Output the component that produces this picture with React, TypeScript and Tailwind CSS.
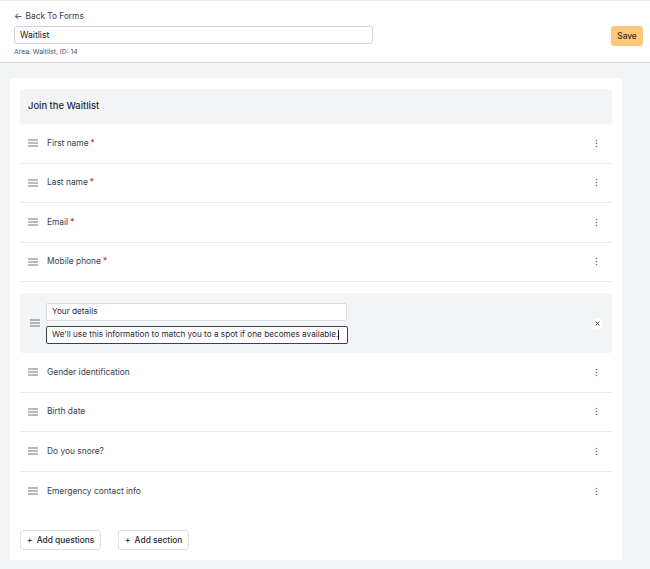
import React from 'react'

const font = { fontFamily: 'Inter, "Noto Sans", sans-serif' }

const Grip: React.FC = () => (
  <svg width="10" height="8" viewBox="0 0 10 8" className="shrink-0">
    <path d="M0 1h10M0 4h10M0 7h10" stroke="#6b7280" strokeWidth="1" />
  </svg>
)

const Kebab: React.FC = () => (
  <svg width="3" height="9" viewBox="0 0 3 9" className="shrink-0">
    <circle cx="1.5" cy="1.5" r="0.8" fill="#6b7280" />
    <circle cx="1.5" cy="4.5" r="0.8" fill="#6b7280" />
    <circle cx="1.5" cy="7.5" r="0.8" fill="#6b7280" />
  </svg>
)

interface Question {
  label: string
  required?: boolean
}

const topQuestions: Question[] = [
  { label: 'First name', required: true },
  { label: 'Last name', required: true },
  { label: 'Email', required: true },
  { label: 'Mobile phone', required: true },
]

const bottomQuestions: Question[] = [
  { label: 'Gender identification' },
  { label: 'Birth date' },
  { label: 'Do you snore?' },
  { label: 'Emergency contact info' },
]

const QuestionRow: React.FC<{ q: Question; last?: boolean }> = ({ q, last }) => (
  <div
    className={`h-[39.5px] flex items-center pl-[8px] pr-[14px] ${
      last ? '' : 'border-b border-[#e9eaec]'
    }`}
  >
    <Grip />
    <span className="ml-[9px] text-[8.4px] text-[#374151] whitespace-nowrap">
      {q.label}
      {q.required && <span className="text-[#c81e1e] ml-[2px]">*</span>}
    </span>
    <div className="ml-auto">
      <Kebab />
    </div>
  </div>
)

export default function App() {
  return (
    <div className="w-[650px] h-[569px] bg-[#f3f4f6] overflow-hidden" style={font}>
      {/* Header */}
      <div className="h-[63px] bg-white border-t border-[#eceef0] border-b border-b-[#d9dbde] flex justify-between items-start pl-[14px] pr-[7px] pt-[9px]">
        <div className="flex flex-col">
          <div className="text-[8.3px] text-[#374151] flex items-center gap-[3px] h-[12px]">
            <span className="text-[9px]">←</span>
            <span>Back To Forms</span>
          </div>
          <div className="mt-[4px] w-[359px] h-[18px] border border-[#d1d5db] rounded-[3px] flex items-center px-[5px] text-[8.6px] text-[#111827]">
            Waitlist
          </div>
          <div className="mt-[3px] text-[6.8px] text-[#4b5563]">Area: Waitlist, ID: 14</div>
        </div>
        <button className="mt-[16px] w-[32px] h-[20px] rounded-[3px] bg-[#fbc879] text-[8.3px] font-medium text-[#3b2f1e] flex items-center justify-center">
          Save
        </button>
      </div>

      {/* Body */}
      <div className="px-[10px] pt-[15px]">
        <div className="w-[612px] h-[482px] bg-white rounded-[2px] px-[10px] pt-[11px] flex flex-col">
          <div className="h-[35px] bg-[#f3f4f6] rounded-[3px] flex items-center px-[8px] text-[9.4px] font-medium text-[#1f2937]">
            Join the Waitlist
          </div>

          {topQuestions.map((q) => (
            <QuestionRow key={q.label} q={q} />
          ))}

          {/* Section */}
          <div className="pt-[11px]">
            <div className="h-[60px] bg-[#f3f4f6] rounded-[3px] flex items-center pl-[10px] pr-[9px]">
              <Grip />
              <div className="ml-[6px] flex flex-col gap-[5px]">
                <div className="w-[301px] h-[18px] bg-white border border-[#d8dbdf] rounded-[2px] flex items-center px-[5px] text-[8.2px] text-[#1f2937] whitespace-nowrap">
                  Your details
                </div>
                <div className="w-[302px] h-[18px] bg-white border border-[#374151] rounded-[2px] flex items-center px-[5px] text-[8.2px] text-[#1f2937] whitespace-nowrap overflow-hidden">
                  We'll use this information to match you to a spot if one becomes available.
                  <span className="inline-block w-[1px] h-[10px] bg-[#111827]" />
                </div>
              </div>
              <div className="ml-auto w-[11px] h-[11px] rounded-full bg-white flex items-center justify-center">
                <svg width="5" height="5" viewBox="0 0 5 5">
                  <path d="M0.5 0.5l4 4M4.5 0.5l-4 4" stroke="#4b5563" strokeWidth="1" />
                </svg>
              </div>
            </div>
          </div>

          {bottomQuestions.map((q, i) => (
            <QuestionRow key={q.label} q={q} last={i === bottomQuestions.length - 1} />
          ))}

          <div className="mt-[19px] flex gap-[17px]">
            <button className="w-[81px] h-[20px] border border-[#dfe1e4] rounded-[3px] bg-white text-[8.4px] font-medium text-[#1f2937] flex items-center justify-center gap-[4px]">
              <span className="font-normal text-[9px]">+</span> Add questions
            </button>
            <button className="w-[71px] h-[20px] border border-[#dfe1e4] rounded-[3px] bg-white text-[8.4px] font-medium text-[#1f2937] flex items-center justify-center gap-[4px]">
              <span className="font-normal text-[9px]">+</span> Add section
            </button>
          </div>
        </div>
      </div>
    </div>
  )
}
